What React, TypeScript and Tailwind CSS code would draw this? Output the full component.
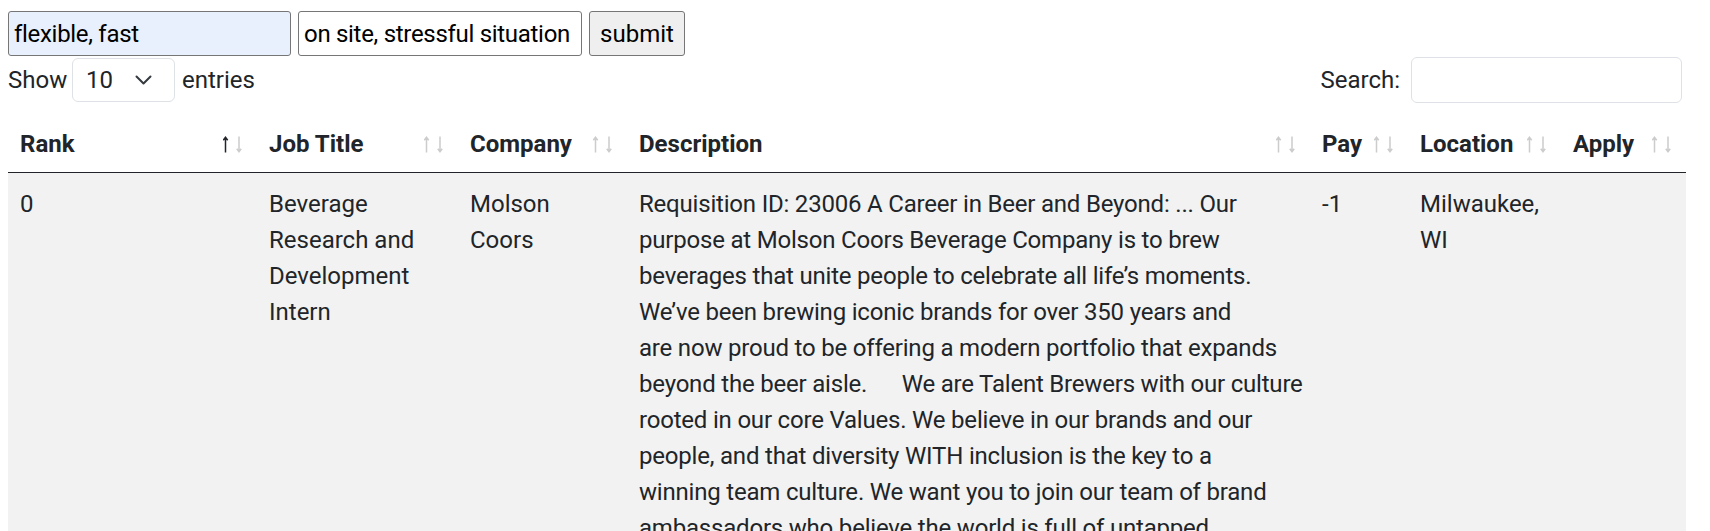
const descLines = [
  "Requisition ID: 23006 A Career in Beer and Beyond: ... Our",
  "purpose at Molson Coors Beverage Company is to brew",
  "beverages that unite people to celebrate all life’s moments.",
  "We’ve been brewing iconic brands for over 350 years and",
  "are now proud to be offering a modern portfolio that expands",
  "beyond the beer aisle.      We are Talent Brewers with our culture",
  "rooted in our core Values. We believe in our brands and our",
  "people, and that diversity WITH inclusion is the key to a",
  "winning team culture. We want you to join our team of brand",
  "ambassadors who believe the world is full of untapped",
  "opportunities and are ready to help us shape the future of",
  "our industry.",
]

const columns = [
  { label: "Rank", width: "w-[249px]", active: true },
  { label: "Job Title", width: "w-[201px]", active: false },
  { label: "Company", width: "w-[169px]", active: false },
  { label: "Description", width: "w-[683px]", active: false },
  { label: "Pay", width: "w-[98px]", active: false },
  { label: "Location", width: "w-[153px]", active: false },
  { label: "Apply", width: "w-[125px]", active: false },
]

function SortArrows({ active }: { active: boolean }) {
  const up = active ? "#212529" : "#cccccc"
  const down = "#cccccc"
  return (
    <svg width="19" height="17" viewBox="0 0 19 17" fill="none" strokeWidth="1.5" className="shrink-0">
      <path d="M2.5 1.5V16.5M0.3 4.2L2.5 1.3L4.7 4.2" stroke={up} />
      <path d="M16 0.5V15.5M13.8 12.8L16 15.7L18.2 12.8" stroke={down} />
    </svg>
  )
}

export default function App() {
  return (
    <div className="min-h-screen bg-white pl-2 pt-[11px] font-['Roboto',sans-serif] text-[24px] leading-[36px] text-[#212529]">
      {/* search form */}
      <div className="flex gap-[7px]">
        <input
          defaultValue="flexible, fast"
          className="h-[45px] w-[283px] rounded-[3px] border border-[#767676] bg-[#e8f0fe] px-[5px] text-[24px] tracking-[-0.3px] text-black outline-none"
        />
        <input
          defaultValue="on site, stressful situation"
          className="h-[45px] w-[284px] rounded-[3px] border border-[#767676] bg-white px-[5px] text-[24px] tracking-[-0.3px] text-black outline-none"
        />
        <button className="h-[45px] w-[96px] rounded-[3px] border border-[#767676] bg-[#efefef] text-[24px] text-black">
          submit
        </button>
      </div>

      <div className="w-[1678px]">
        {/* length + filter */}
        <div className="mt-px flex items-center justify-between">
          <div className="flex items-center">
            <span className="w-[64px]">Show</span>
            <div className="flex h-[44px] w-[103px] items-center justify-between rounded-md border border-[#dee2e6] pl-[13px] pr-[22px]">
              <span>10</span>
              <svg width="17" height="10" viewBox="0 0 17 10" fill="none" stroke="#343a40" strokeWidth="2" strokeLinecap="round" strokeLinejoin="round">
                <path d="M1.5 1.5L8.5 8.5L15.5 1.5" />
              </svg>
            </div>
            <span className="ml-[7px]">entries</span>
          </div>
          <div className="mr-1 flex items-center">
            <span>Search:</span>
            <input className="ml-[11px] h-[46px] w-[271px] rounded-md border border-[#dee2e6] bg-white px-3 outline-none" />
          </div>
        </div>

        {/* results table */}
        <table className="mt-[11px] w-[1678px] table-fixed border-collapse">
          <colgroup>
            {columns.map((c) => (
              <col key={c.label} className={c.width} />
            ))}
          </colgroup>
          <thead>
            <tr className="border-b border-[#212529]">
              {columns.map((c) => (
                <th key={c.label} className="pb-[10px] pl-3 pr-[15px] pt-3 text-left font-bold">
                  <div className="flex items-center justify-between">
                    <span>{c.label}</span>
                    <SortArrows active={c.active} />
                  </div>
                </th>
              ))}
            </tr>
          </thead>
          <tbody>
            <tr className="bg-[#f2f2f2] align-top">
              <td className="px-3 pt-[13px]">0</td>
              <td className="px-3 pt-[13px]">
                Beverage
                <br />
                Research and
                <br />
                Development
                <br />
                Intern
              </td>
              <td className="px-3 pt-[13px]">
                Molson
                <br />
                Coors
              </td>
              <td className="px-3 pt-[13px] pb-3 tracking-[-0.2px]">
                {descLines.map((l) => (
                  <div key={l} className="whitespace-pre">
                    {l}
                  </div>
                ))}
              </td>
              <td className="px-3 pt-[13px]">-1</td>
              <td className="px-3 pt-[13px]">
                Milwaukee,
                <br />
                WI
              </td>
              <td className="px-3 pt-[13px]"></td>
            </tr>
          </tbody>
        </table>
      </div>
    </div>
  )
}
